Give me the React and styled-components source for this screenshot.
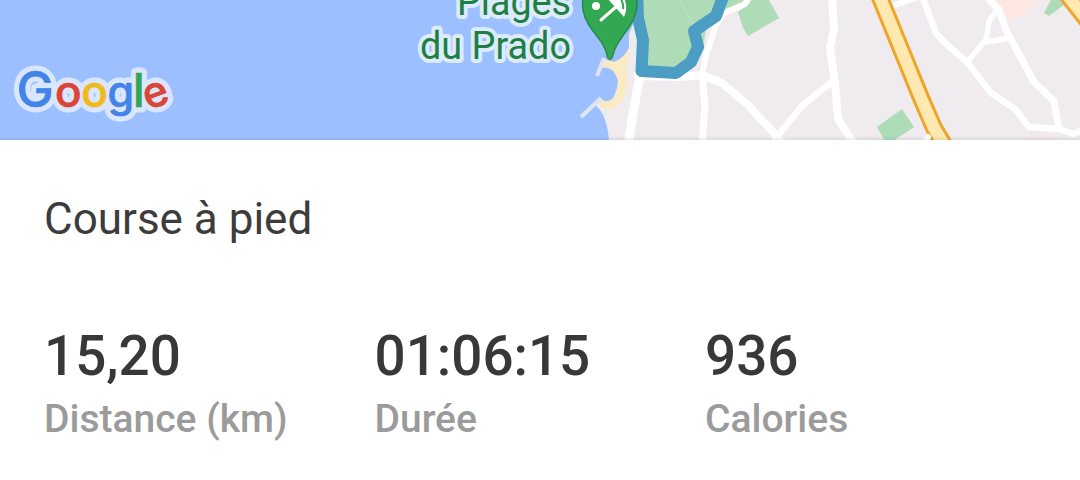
import React from "react";
import styled, { createGlobalStyle } from "styled-components";

const GlobalStyle = createGlobalStyle`
  body {
    margin: 0;
    background-color: #fff;
    font-family: Roboto, "Liberation Sans", sans-serif;
  }
`;

// Styled Components
const Card = styled.div`
  width: 1080px;
  height: 480px;
  display: flex;
  flex-direction: column;
  overflow: hidden;
  background-color: #fff;
`;

const MapArea = styled.div`
  position: relative;
  height: 140px;
  flex-shrink: 0;
  overflow: hidden;
  background-color: #9cc0ff;
`;

const MapCanvas = styled.svg`
  display: block;
  font-family: Roboto, sans-serif;
`;

const MapShadow = styled.div`
  position: absolute;
  left: 0;
  right: 0;
  bottom: 0;
  height: 4px;
  background: linear-gradient(rgba(60, 60, 80, 0), rgba(60, 60, 80, 0.1));
`;

const Details = styled.section`
  display: flex;
  flex-direction: column;
  padding: 53px 44px 0;
`;

const ActivityName = styled.h1`
  margin: 0;
  font-size: 44px;
  font-weight: 400;
  line-height: 52px;
  color: #3c3c3c;
`;

const Stats = styled.div`
  display: grid;
  grid-template-columns: repeat(3, 330.5px);
  margin-top: 79px;
`;

const Stat = styled.div`
  display: flex;
  flex-direction: column;
`;

const StatValue = styled.span`
  font-size: 54.8px;
  font-weight: 500;
  line-height: 64px;
  color: #37383a;
  white-space: nowrap;
`;

const StatLabel = styled.span`
  font-size: 39px;
  font-weight: 500;
  line-height: 44px;
  margin-top: 9px;
  color: #9b9b9b;
  white-space: nowrap;
`;

const PlaceLabel = styled.text`
  font-size: 39px;
  font-weight: 400;
  text-anchor: end;
  fill: #1f7f43;
  stroke: #dcebfc;
  stroke-width: 8px;
  stroke-linejoin: round;
  paint-order: stroke;
`;

const LogoText = styled.text`
  font-family: Inter, sans-serif;
  font-weight: 500;
  fill: ${(props) => props.$color};
  stroke: ${(props) => props.$color};
  stroke-width: ${(props) => (props.$halo ? 11 : 0.7)}px;
  stroke-linejoin: round;
`;

const Road = styled.path`
  fill: none;
  stroke: ${(props) => props.$color || "#fff"};
  stroke-width: ${(props) => props.$width || 6}px;
  stroke-linejoin: round;
  stroke-linecap: ${(props) => props.$cap || "round"};
`;

const logoLetters = [
  { char: "G", x: 16.8, size: 49.5, color: "#4484e8" },
  { char: "o", x: 55, size: 44, color: "#da4537" },
  { char: "o", x: 81.2, size: 44, color: "#f1ba1b" },
  { char: "g", x: 107.6, size: 43, color: "#4484e8" },
  { char: "l", x: 133, size: 46, color: "#35a457" },
  { char: "e", x: 143.2, size: 42.5, color: "#da4537", turn: "rotate(-20 156 95)" },
];

const stats = [
  { value: "15,20", label: "Distance (km)" },
  { value: "01:06:15", label: "Durée" },
  { value: "936", label: "Calories" },
];

const GoogleLogo = () => (
  <g>
    {[true, false].map((halo) =>
      logoLetters.map((l) => (
        <LogoText
          key={`${halo}-${l.x}`}
          x={l.x}
          y="106.5"
          fontSize={l.size}
          transform={l.turn}
          $halo={halo}
          $color={halo ? "#d9e6fc" : l.color}
        >
          {l.char}
        </LogoText>
      ))
    )}
  </g>
);

const BeachPin = () => (
  <g>
    <path
      d="M582.5 4C582.5 -11 594 -22 609.5 -22S637 -11 637 4C637 14 633 22 627 30C619 41 614 48 612.500 57Q610 62 607.500 57C606 47 600 40 593 31C586 22 582.500 14 582.500 4Z"
      fill="#33a853"
      stroke="#268b48"
      strokeWidth="1.5"
    />
    <circle cx="596" cy="6" r="4" fill="#fff" />
    <path d="M601 20L617 6" stroke="#fff" strokeWidth="3" strokeLinecap="round" />
    <path d="M608 -1L624 17Q629 7 623 -4L612 -6Z" fill="#fff" />
    <path d="M620 -3Q624 4 623 9" fill="none" stroke="#33a853" strokeWidth="2" />
  </g>
);

// Land, parks, roads and the recorded track
const CityMap = () => (
  <MapCanvas width="1080" height="140" viewBox="0 0 1080 140">
    <rect width="1080" height="140" fill="#9cc0ff" />
    <path d="M634 0H1080V140H609C608 129 606 120 602 113Q598 107 595 105L605 98L620 60L629 50L629 34L634 22Z" fill="#efebef" />

    <path d="M603 59L614 62Q624 58 629 48L629 60L626 70L628 79Q627 90 624 97Q618 108 608 110Q600 107 596 101L602 97Q612 101 616 95L618 84Q616 75 613 71L600 68Z" fill="#faebc5" />
    <path d="M599 68Q614 65 618 81Q617 91 613 98Q608 104 601 99L596 94Z" fill="#9cc0ff" />
    <path d="M581 117L601 98M597 76L604 58" fill="none" stroke="#dfe5f2" strokeWidth="4" />

    <path d="M636 0H760L721 8L706 30L703 46L690 62L677 76L641 72Z" fill="#addcb7" />
    <path d="M680 0L693 26" stroke="#b6dfc0" strokeWidth="1.5" />
    <path d="M730 0H749L739 10L722 14Z" fill="#addcb7" />
    <path d="M738 12L748 5L752 0H769L779 18L748 36L743 28Z" fill="#addcb7" />
    <path d="M877 127L902 109L914 127L887 145Z" fill="#addcb7" />
    <path d="M1051 0H1069L1065 4L1049 16L1044 13Z" fill="#addcb7" />
    <path d="M991 0H1036Q1033 11 1019 17Q1010 21 1004 19Z" fill="#ffe7e4" />

    <Road d="M640 75L634 108L628 145" $width={9} />
    <Road d="M638 76L680 77L702 75L722 83L748 105L783 143" $width={8} />
    <Road d="M702 75L705 105L702 145" $width={7} />
    <Road d="M702 75L706 55L716 25L724 13L745 4L750 -4" $width={6} />
    <Road d="M832 -5L834 28L830 48L835 83L838 119L855 145" $width={8} />
    <Road d="M834 80L802 106L775 139" $width={6.5} />
    <Road d="M890 7L923 -5" $width={6} />
    <Road d="M922 -4L936 33L944 42L967 62L991 93L1015 109L1029 127L1060 129L1073 134L1085 129" $width={6.5} />
    <Road d="M985 -5L999 10L1007 32L1034 82L1054 101L1059 129" $width={7} />
    <Road d="M997 9L989 22L986 40L967 62M986 42L1010 38" $width={5.5} />

    <Road d="M877 -10L883 5L921 98L934 128L946 148" $width={18} $color="#eda52a" $cap="butt" />
    <Road d="M877 -10L883 5L921 98L934 128L946 148" $width={12} $color="#ffe9b0" $cap="butt" />
    <Road d="M1065 -8L1090 24" $width={18} $color="#eda52a" $cap="butt" />
    <Road d="M1065 -8L1090 24" $width={12} $color="#ffe9b0" $cap="butt" />
    <Road d="M922 146L928 137" $width={6} />

    <Road d="M637 -10L638 18L643 40L641.500 71L676 73L691 62L698 47L694 31L716 16L724 -6" $width={12} $color="#4b9dc3" $cap="butt" />

    <PlaceLabel x="571" y="14.500" textLength="114" lengthAdjust="spacingAndGlyphs">Plages</PlaceLabel>
    <PlaceLabel x="571" y="59" textLength="151" lengthAdjust="spacingAndGlyphs">du Prado</PlaceLabel>
    <BeachPin />
    <GoogleLogo />
  </MapCanvas>
);

const App = () => {
  return (
    <>
      <GlobalStyle />
      <Card>
        <MapArea>
          <CityMap />
          <MapShadow />
        </MapArea>
        <Details>
          <ActivityName>Course à pied</ActivityName>
          <Stats>
            {stats.map((stat) => (
              <Stat key={stat.label}>
                <StatValue>{stat.value}</StatValue>
                <StatLabel>{stat.label}</StatLabel>
              </Stat>
            ))}
          </Stats>
        </Details>
      </Card>
    </>
  );
};

export default App;
